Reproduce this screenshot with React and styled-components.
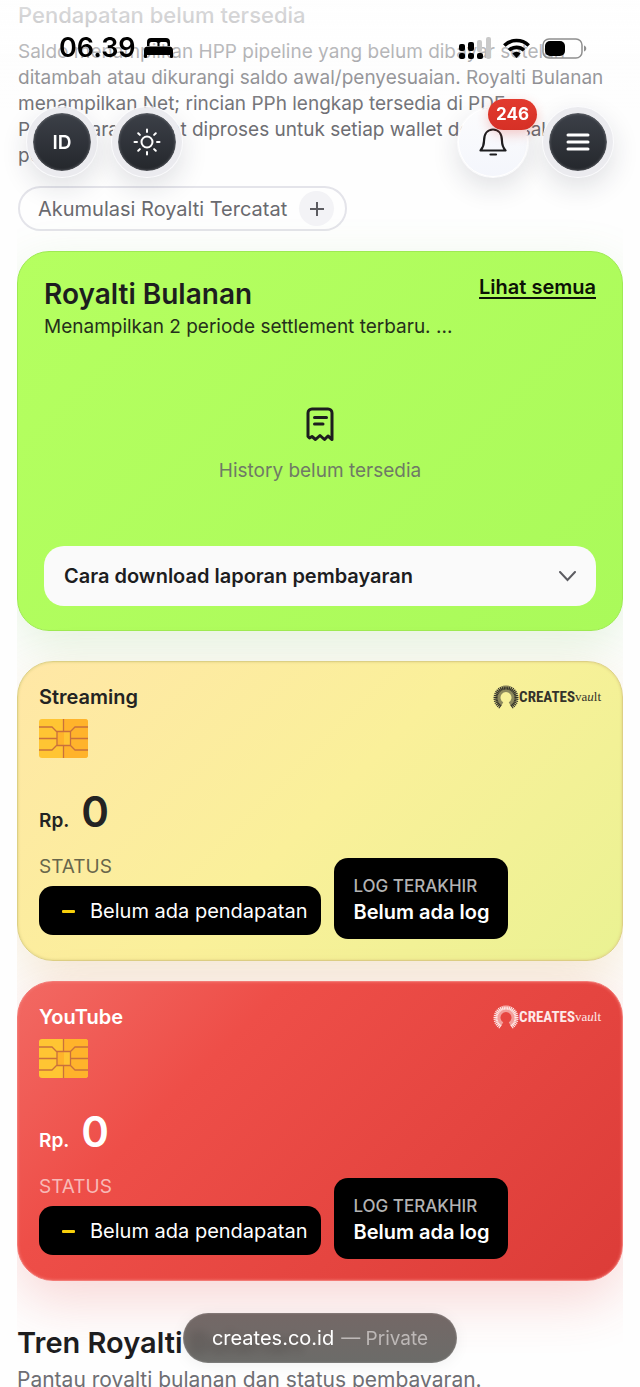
import React from 'react'
import styled, { createGlobalStyle } from 'styled-components'

const GlobalStyle = createGlobalStyle`
  * {
    box-sizing: border-box;
  }
  html,
  body {
    margin: 0;
    height: 100%;
    overflow: hidden;
  }
  body {
    background: #fefefe;
    color: #1d1d1f;
    font-family: Inter, 'Liberation Sans', sans-serif;
    font-size: 19px;
    line-height: 26px;
  }
  h1, h2, h3, p {
    margin: 0;
  }
  button {
    font-family: inherit;
    border: 0;
    padding: 0;
    cursor: pointer;
  }
`

const Page = styled.main`
  margin: 0 17px;
  overflow-x: clip;
`

const Intro = styled.section`
  padding: 0 1px;
`

const IntroTitle = styled.h2`
  font-size: 22px;
  font-weight: 500;
  line-height: 30px;
  color: #6e6e73;
`

const IntroText = styled.p`
  margin-top: 9px;
  color: #6e6e73;
`

const Accumulation = styled.button`
  display: flex;
  align-items: center;
  gap: 12px;
  height: 45px;
  margin-top: 17px;
  padding: 0 11px 0 18px;
  border: 2px solid #e4e4ea;
  border-radius: 23px;
  background: #fefefe;
  color: #6a6a6f;
  font-size: 20px;
`

const Plus = styled.span`
  display: grid;
  place-items: center;
  width: 35px;
  height: 35px;
  border-radius: 50%;
  background: #f3f3f6;
`

const Monthly = styled.section`
  display: flex;
  flex-direction: column;
  margin-top: 20px;
  padding: 22px 26px 24px;
  border: 1px solid #9eea53;
  border-radius: 32px;
  background: linear-gradient(135deg, #b5ff60, #aafa5a);
  box-shadow: 0 16px 50px rgba(110, 190, 80, 0.18);
`

const MonthlyHead = styled.div`
  display: flex;
  justify-content: space-between;
  align-items: flex-start;
`

const MonthlyTitle = styled.h2`
  font-size: 28px;
  font-weight: 600;
  line-height: 40px;
`

const SeeAll = styled.a`
  color: #0c1206;
  font-size: 20px;
  font-weight: 600;
  text-underline-offset: 3px;
`

const MonthlyNote = styled.p`
  color: #25301b;
`

const Empty = styled.div`
  display: flex;
  flex-direction: column;
  align-items: center;
  gap: 16px;
  padding: 67px 0 62px;
  color: #6f7a66;
`

const HowTo = styled.button`
  display: flex;
  align-items: center;
  justify-content: space-between;
  height: 60px;
  padding: 0 20px;
  border-radius: 20px;
  background: #fafafa;
  color: #1d1d1f;
  font-size: 20px;
  font-weight: 600;
`

const Wallet = styled.section`
  height: 300px;
  margin-top: ${(p) => p.$gap}px;
  padding: 22px 21px;
  border: 1px solid ${(p) => p.$border};
  border-radius: 36px;
  background: ${(p) => p.$bg};
  box-shadow: inset 0 0 3px ${(p) => p.$border}, 0 20px 54px ${(p) => p.$shadow};
  color: ${(p) => p.$color};
`

const WalletHead = styled.div`
  display: flex;
  justify-content: space-between;
  align-items: center;
`

const WalletTitle = styled.h3`
  font-size: 20px;
  font-weight: 600;
`

const Brand = styled.div`
  display: flex;
  align-items: center;
  color: ${(p) => p.$color};
`

const BrandName = styled.span`
  font-family: 'Roboto Condensed', 'Liberation Sans Narrow', 'Liberation Sans', sans-serif;
  font-size: 15px;
  font-weight: 700;
`

const BrandSuffix = styled.span`
  align-self: flex-end;
  font-family: 'Liberation Serif', serif;
  font-size: 13px;
`

const Chip = styled.svg`
  display: block;
  margin-top: 9px;
`

const Amount = styled.div`
  display: flex;
  align-items: baseline;
  gap: 12px;
  margin-top: 28px;
  font-size: 19px;
  font-weight: 600;
`

const Value = styled.span`
  font-size: 42px;
  line-height: 52px;
`

const Details = styled.div`
  display: flex;
  align-items: flex-start;
  gap: 13px;
  margin-top: 20px;
`

const StatusLabel = styled.div`
  margin-bottom: 10px;
  line-height: 18px;
  color: ${(p) => p.$color};
`

const Status = styled.div`
  display: flex;
  align-items: center;
  gap: 15px;
  height: 49px;
  padding: 0 14px 0 23px;
  border-radius: 14px;
  background: #000;
  color: #fff;
  font-size: 20px;
`

const Log = styled.div`
  height: 81px;
  padding: 15px 19px;
  border-radius: 14px;
  background: #000;
  color: #fff;
  font-size: 20px;
  font-weight: 600;
`

const LogLabel = styled.div`
  font-size: 17px;
  font-weight: 500;
  color: #b3b3b3;
`

const Trend = styled.section`
  margin-top: 42px;
  color: #6e6e73;
`

const TrendTitle = styled.h2`
  font-size: 29px;
  line-height: 40px;
  font-weight: 600;
  color: #1d1d1f;
`

const TrendNote = styled.p`
  font-size: 21px;
  line-height: 34px;
`

const TopFade = styled.div`
  position: fixed;
  inset: 0 0 auto;
  height: 110px;
  background: linear-gradient(rgba(254, 254, 254, 0.8), rgba(254, 254, 254, 0.5) 48%, rgba(254, 254, 254, 0));
`

const StatusBar = styled.header`
  position: fixed;
  inset: 34px 53px auto 59px;
  display: flex;
  justify-content: space-between;
  align-items: center;
  color: #000;
`

const BarGroup = styled.div`
  display: flex;
  align-items: center;
  gap: ${(p) => p.$gap}px;
`

const Clock = styled.time`
  font-size: 27px;
  font-weight: 600;
  line-height: 28px;
`

const Nav = styled.nav`
  position: fixed;
  inset: 107px 27px auto;
  display: flex;
  justify-content: space-between;
`

const NavGroup = styled.div`
  display: flex;
  gap: 15px;
`

const Round = styled.button`
  position: relative;
  display: grid;
  place-items: center;
  width: 70px;
  height: 70px;
  border: ${(p) => (p.$dark ? '6px solid #ebebef' : '1px solid #fff')};
  border-radius: 50%;
  background: ${(p) =>
    p.$dark
      ? 'linear-gradient(#3c4048, #24272c) padding-box'
      : 'linear-gradient(#fcfcfd, #f4f6fc)'};
  box-shadow: ${(p) => p.$dark && 'inset 0 0 3px #8a8c92, '}0 0 0 1px #fbfbfd, 0 10px 28px rgba(30, 35, 60, 0.14);
  color: ${(p) => (p.$dark ? '#fff' : '#1d1d1f')};
  font-size: 19px;
  font-weight: 600;
`

const Badge = styled.span`
  position: absolute;
  top: -9px;
  left: 29px;
  height: 31px;
  padding: 0 8px;
  border-radius: 16px;
  background: linear-gradient(#e23a2e, #d63026);
  box-shadow: 0 4px 12px rgba(220, 50, 40, 0.25);
  color: #fff;
  font-size: 17px;
  font-weight: 700;
  line-height: 31px;
`

const AddressWrap = styled.footer`
  position: fixed;
  inset: auto 0 24px;
  display: flex;
  justify-content: center;
`

const Address = styled.button`
  display: flex;
  align-items: center;
  gap: 7px;
  height: 50px;
  padding: 0 29px;
  border-radius: 25px;
  background: linear-gradient(rgba(104, 91, 89, 0.92), rgba(95, 95, 92, 0.92));
  backdrop-filter: blur(4px);
  box-shadow: inset 0 0 2px rgba(255, 255, 255, 0.4), 0 2px 16px rgba(0, 0, 0, 0.06);
  color: #fff;
  font-size: 20px;
`

const Muted = styled.span`
  color: #bdb8b7;
  font-size: 19px;
`

const rays = Array.from({ length: 31 }, (_, i) => -145 + (i * 290) / 30)

const BrandLogo = ({ color }) => (
  <Brand $color={color}>
    <svg width="26" height="25" viewBox="0 0 26 25" aria-hidden="true">
      {rays.map((angle) => (
        <path
          key={angle}
          d="M13 4.500V0.500"
          transform={`rotate(${angle} 13 13)`}
          stroke="currentColor"
          strokeWidth="1.200"
        />
      ))}
      <path
        d="M9 19.500a8 8 0 1 1 8 0"
        fill="none"
        stroke="currentColor"
        strokeWidth="5"
        opacity="0.55"
      />
    </svg>
    <BrandName>CREATES</BrandName>
    <BrandSuffix>
      va<i>u</i>lt
    </BrandSuffix>
  </Brand>
)

const SimChip = () => (
  <Chip width="49" height="39" viewBox="0 0 49 39" aria-hidden="true">
    <rect width="49" height="39" rx="3" fill="#ffc533" />
    <path d="M25 0h21a3 3 0 0 1 3 3v33a3 3 0 0 1-3 3H25z" fill="#ffb32b" />
    <path d="M18 13h7v14h-7z" fill="#ffb32b" />
    <path d="M25 13h6v14h-6z" fill="#ffc533" />
    <path
      d="M18 12.500h13.500v14H18zM24.500 0v12.500M24.500 26.500V39M0 8h13l5 5M0 19.500h18M0 31h13l5-5M49 8H36l-5 5M49 19.500H31.500M49 31H36l-5-5"
      fill="none"
      stroke="#c9703c"
      strokeWidth="1.300"
    />
  </Chip>
)

const WalletCard = ({ title, look }) => (
  <Wallet
    $gap={look.gap}
    $bg={look.bg}
    $border={look.border}
    $shadow={look.shadow}
    $color={look.color}
  >
    <WalletHead>
      <WalletTitle>{title}</WalletTitle>
      <BrandLogo color={look.logo} />
    </WalletHead>
    <SimChip />
    <Amount>
      Rp. <Value>0</Value>
    </Amount>
    <Details>
      <div>
        <StatusLabel $color={look.label}>STATUS</StatusLabel>
        <Status>
          <svg width="13" height="4" aria-hidden="true">
            <rect width="13" height="3" y="1" rx="1" fill="#f7cf0b" />
          </svg>
          Belum ada pendapatan
        </Status>
      </div>
      <Log>
        <LogLabel>LOG TERAKHIR</LogLabel>
        Belum ada log
      </Log>
    </Details>
  </Wallet>
)

const yellow = {
  gap: 30,
  bg: 'linear-gradient(135deg, #ffe7a6, #faf09a 50%, #eaf292)',
  border: '#ddd084',
  shadow: 'rgba(215, 165, 80, 0.24)',
  color: '#232323',
  label: '#68664b',
  logo: '#34332b',
}

const red = {
  gap: 20,
  bg: 'linear-gradient(135deg, #f26963, #ee4e48 30%, #dc3c38)',
  border: '#f37a75',
  shadow: 'rgba(225, 60, 55, 0.2)',
  color: '#fff',
  label: '#f8b9b6',
  logo: '#fde9e8',
}

const App = () => (
  <>
    <GlobalStyle />
    <Page>
      <Intro>
        <IntroTitle>Pendapatan belum tersedia</IntroTitle>
        <IntroText>
          Saldo menampilkan HPP pipeline yang belum dibayar setelah ditambah atau
          dikurangi saldo awal/penyesuaian. Royalti Bulanan menampilkan Net;
          rincian PPh lengkap tersedia di PDF. Pembayaran dapat diproses untuk
          setiap wallet dengan saldo positif.
        </IntroText>
        <Accumulation>
          Akumulasi Royalti Tercatat
          <Plus>
            <svg width="14" height="14" stroke="#5c5c61" strokeWidth="2" aria-hidden="true">
              <path d="M7 0v14M0 7h14" />
            </svg>
          </Plus>
        </Accumulation>
      </Intro>

      <Monthly>
        <MonthlyHead>
          <MonthlyTitle>Royalti Bulanan</MonthlyTitle>
          <SeeAll href="#history">Lihat semua</SeeAll>
        </MonthlyHead>
        <MonthlyNote>Menampilkan 2 periode settlement terbaru. ...</MonthlyNote>
        <Empty>
          <svg
            width="28"
            height="35"
            viewBox="0 0 28 35"
            fill="none"
            stroke="#1d1d1f"
            strokeWidth="3"
            strokeLinecap="round"
            strokeLinejoin="round"
            aria-hidden="true"
          >
            <path d="M2 29.500V6a4 4 0 0 1 4-4h16a4 4 0 0 1 4 4v26.500l-4-3.500-3.500 3.500-4.500-4-4.500 4-3.500-3-2.500 1.500z" />
            <path d="M8.500 10.500h12M8.500 17h8.500" />
          </svg>
          <p>History belum tersedia</p>
        </Empty>
        <HowTo>
          Cara download laporan pembayaran
          <svg width="17" height="11" fill="none" stroke="#5c5c61" strokeWidth="2" aria-hidden="true">
            <path d="M1 1l7.500 8L16 1" strokeLinecap="round" />
          </svg>
        </HowTo>
      </Monthly>

      <WalletCard title="Streaming" look={yellow} />
      <WalletCard title="YouTube" look={red} />

      <Trend>
        <TrendTitle>Tren Royalti Bulanan</TrendTitle>
        <TrendNote>Pantau royalti bulanan dan status pembayaran.</TrendNote>
      </Trend>
    </Page>

    <TopFade />
    <StatusBar>
      <BarGroup $gap={8}>
        <Clock>06.39</Clock>
        <svg width="29" height="20" viewBox="0 0 29 20" aria-hidden="true">
          <path d="M3 8V4a4 4 0 0 1 4-4h15a4 4 0 0 1 4 4v4h-2.500V6a2 2 0 0 0-2-2H17a1.500 1.500 0 0 0-1.500 1.500V8h-2V5.500A1.500 1.500 0 0 0 12 4H7.500a2 2 0 0 0-2 2v2z" />
          <path d="M4 8.500h21a4 4 0 0 1 4 4V19a1 1 0 0 1-1 1h-1a1 1 0 0 1-1-1v-2H3v2a1 1 0 0 1-1 1H1a1 1 0 0 1-1-1v-6.500a4 4 0 0 1 4-4z" />
        </svg>
      </BarGroup>
      <BarGroup $gap={12}>
        <svg width="32" height="24" viewBox="0 0 32 24" aria-hidden="true">
          <rect x="0" y="8" width="6" height="7" rx="2" />
          <rect x="9" y="6" width="6" height="9" rx="2" />
          <rect x="18" y="4" width="5" height="12" rx="2" fill="#c9c9c9" />
          <rect x="27" y="1" width="5" height="22" rx="2" fill="#c9c9c9" />
          <rect x="0" y="17" width="6" height="6" rx="2" />
          <rect x="9" y="17" width="6" height="6" rx="2" />
          <rect x="18" y="17" width="6" height="6" rx="2" />
        </svg>
        <svg width="27" height="20" viewBox="0 0 27 20" fill="none" stroke="#000" strokeWidth="3.600" aria-hidden="true">
          <path d="M1.300 7.500a17.500 17.500 0 0 1 24.400 0" />
          <path d="M6 12.300a11 11 0 0 1 15 0" />
          <path d="M13.500 20l-4.200-4.500a6.500 6.500 0 0 1 8.400 0z" fill="#000" stroke="none" />
        </svg>
        <svg width="45" height="21" viewBox="0 0 45 21" aria-hidden="true">
          <rect x="1" y="1" width="39" height="19" rx="6" fill="none" stroke="#8f8f8f" strokeWidth="1.500" />
          <rect x="3" y="3" width="20" height="15" rx="5" />
          <path d="M42 7.500c3 1 3 5 0 6z" fill="#8f8f8f" />
        </svg>
      </BarGroup>
    </StatusBar>

    <Nav>
      <NavGroup>
        <Round $dark>ID</Round>
        <Round $dark aria-label="Tema">
          <svg
            width="28"
            height="28"
            viewBox="0 0 28 28"
            fill="none"
            stroke="currentColor"
            strokeWidth="2"
            strokeLinecap="round"
            aria-hidden="true"
          >
            <circle cx="14" cy="14" r="5.500" />
            <path d="M14 1.500v2.500M14 24v2.500M1.500 14H4M24 14h2.500M5.200 5.200l1.700 1.700M21.100 21.100l1.700 1.700M5.200 22.800l1.700-1.700M21.100 6.900l1.700-1.700" />
          </svg>
        </Round>
      </NavGroup>
      <NavGroup>
        <Round aria-label="Notifikasi">
          <svg
            width="28"
            height="28"
            viewBox="0 0 28 28"
            fill="none"
            stroke="currentColor"
            strokeWidth="2.200"
            strokeLinecap="round"
            strokeLinejoin="round"
            aria-hidden="true"
          >
            <path d="M1.500 22.500c2.500-3 3.500-5 3.500-9.500C5 6 8.500 1.500 14 1.500S23 6 23 13c0 4.500 1 6.500 3.500 9.500z" />
            <path d="M11.500 26.500h5.500" />
          </svg>
          <Badge>246</Badge>
        </Round>
        <Round $dark aria-label="Menu">
          <svg width="24" height="20" stroke="currentColor" strokeWidth="3" strokeLinecap="round" aria-hidden="true">
            <path d="M2 3h20M2 10h20M2 17h20" />
          </svg>
        </Round>
      </NavGroup>
    </Nav>

    <AddressWrap>
      <Address>
        creates.co.id <Muted>— Private</Muted>
      </Address>
    </AddressWrap>
  </>
)

export default App
